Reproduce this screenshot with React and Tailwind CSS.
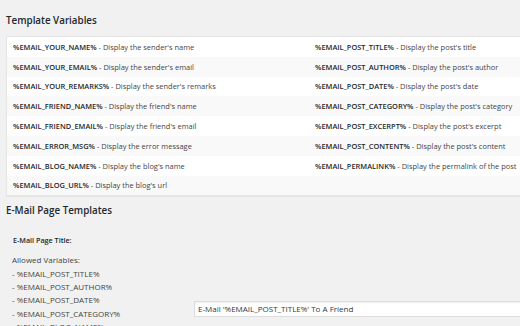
import React from "react";

const left = [
  ["%EMAIL_YOUR_NAME%", "Display the sender's name"],
  ["%EMAIL_YOUR_EMAIL%", "Display the sender's email"],
  ["%EMAIL_YOUR_REMARKS%", "Display the sender's remarks"],
  ["%EMAIL_FRIEND_NAME%", "Display the friend's name"],
  ["%EMAIL_FRIEND_EMAIL%", "Display the friend's email"],
  ["%EMAIL_ERROR_MSG%", "Display the error message"],
  ["%EMAIL_BLOG_NAME%", "Display the blog's name"],
  ["%EMAIL_BLOG_URL%", "Display the blog's url"],
];
const right = [
  ["%EMAIL_POST_TITLE%", "Display the post's title"],
  ["%EMAIL_POST_AUTHOR%", "Display the post's author"],
  ["%EMAIL_POST_DATE%", "Display the post's date"],
  ["%EMAIL_POST_CATEGORY%", "Display the post's category"],
  ["%EMAIL_POST_EXCERPT%", "Display the post's excerpt"],
  ["%EMAIL_POST_CONTENT%", "Display the post's content"],
  ["%EMAIL_PERMALINK%", "Display the permalink of the post"],
  null,
];

function Var({ item }) {
  if (!item) return null;
  return (
    <>
      <span className="font-semibold text-[#23282d]">{item[0]}</span>
      <span> - {item[1]}</span>
    </>
  );
}

export default function App() {
  return (
    <div
      className="w-[520px] h-[326px] overflow-hidden bg-[#f1f1f1] text-[#444] pl-[6px]"
      style={{ fontFamily: '"Open Sans", sans-serif' }}
    >
      <h3 className="pt-[14px] text-[9.8px] leading-[14px] font-semibold text-[#23282d]">
        Template Variables
      </h3>
      <div className="mt-[8px] w-[540px] bg-white border border-[#e5e5e5] shadow-[0_1px_1px_rgba(0,0,0,0.04)] text-[7.45px]">
        {left.map((l, i) => (
          <div
            key={i}
            className={`flex items-center h-[19.8px] leading-[12px] ${i % 2 === 1 ? "bg-[#f9f9f9]" : "bg-white"}`}
          >
            <div className="w-[302px] shrink-0 pl-[6px] whitespace-nowrap">
              <Var item={l} />
            </div>
            <div className="flex-1 pl-[6px] whitespace-nowrap">
              <Var item={right[i]} />
            </div>
          </div>
        ))}
      </div>
      <h3 className="mt-[8px] text-[9.8px] leading-[14px] font-semibold text-[#23282d]">
        E-Mail Page Templates
      </h3>
      <div className="flex text-[8px]">
        <div className="w-[188px] shrink-0 pl-[7px] pt-[16px]">
          <div className="font-semibold text-[7.2px] text-[#23282d] leading-[13px]">E-Mail Page Title:</div>
          <div className="mt-[6px] -ml-[1px] leading-[13.3px] text-[#444]">
            <div>Allowed Variables:</div>
            <div>- %EMAIL_POST_TITLE%</div>
            <div>- %EMAIL_POST_AUTHOR%</div>
            <div>- %EMAIL_POST_DATE%</div>
            <div>- %EMAIL_POST_CATEGORY%</div>
            <div>- %EMAIL_BLOG_NAME%</div>
          </div>
        </div>
        <div className="flex-1">
          <div className="mt-[83px] w-[340px] h-[16px] bg-white border border-[#ddd] shadow-[inset_0_1px_2px_rgba(0,0,0,0.07)] flex items-center pl-[3px] text-[#32373c] whitespace-nowrap">
            E-Mail '%EMAIL_POST_TITLE%' To A Friend
          </div>
        </div>
      </div>
    </div>
  );
}
